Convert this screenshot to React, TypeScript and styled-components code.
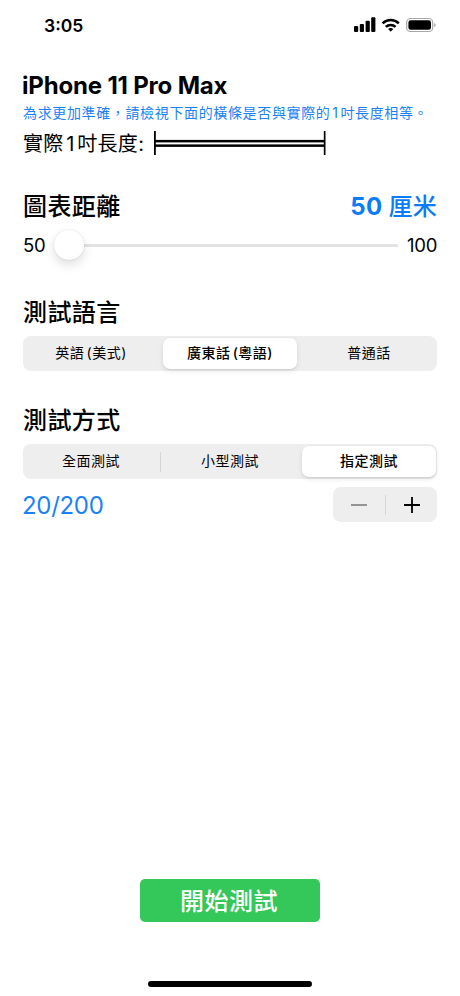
import React, { useState } from 'react';
import styled, { createGlobalStyle, css } from 'styled-components';

const GlobalStyle = createGlobalStyle`
  * { box-sizing: border-box; }
  body {
    margin: 0;
    background: #fff;
    color: #000;
    font-family: Inter, "Noto Sans CJK TC", sans-serif;
    -webkit-font-smoothing: antialiased;
  }
  button { font: inherit; color: inherit; border: 0; padding: 0; background: none; }
`;

const Screen = styled.div`
  width: 460px;
  height: 996px;
  display: flex;
  flex-direction: column;
  background: #fff;
  overflow: hidden;
`;

const StatusBar = styled.header`
  height: 50px;
  padding: 0 24px 0 44px;
  display: flex;
  align-items: center;
  justify-content: space-between;
`;

const Clock = styled.time`
  font-size: 17.5px;
  font-weight: 600;
  letter-spacing: 0;
  line-height: 20px;
  padding-top: 1px;
`;

const Content = styled.main`
  flex: 1;
  display: flex;
  flex-direction: column;
  padding: 21px 23px 0;
`;

const Device = styled.h1`
  margin: 0 0 0 -1px;
  font-size: 24px;
  line-height: 30px;
  font-weight: 650;
  letter-spacing: -0.18px;
`;

const Hint = styled.p`
  margin: 2px 0 0;
  color: #1a82f7;
  font-size: 14px;
  line-height: 20px;
  letter-spacing: 0.64px;
  white-space: nowrap;
`;

const Numeral = styled.span`
  margin: 0 0.13em;
`;

const MeasureRow = styled.div`
  margin-top: 6px;
  height: 28px;
  display: flex;
  align-items: center;
  justify-content: space-between;
  width: 303px;
`;

const MeasureLabel = styled.span`
  font-size: 20px;
  letter-spacing: 0.3px;
  line-height: 28px;
  padding-top: 1px;
  white-space: nowrap;
`;

const SectionHead = styled.div<{ $top: number }>`
  margin-top: ${(p) => p.$top}px;
  height: 32px;
  display: flex;
  align-items: center;
  justify-content: space-between;
`;

const Heading = styled.h2`
  margin: 0;
  padding-top: 1px;
  font-size: 24px;
  line-height: 32px;
  font-weight: 500;
  letter-spacing: 0.4px;
`;

const Distance = styled.span`
  color: #0a7cf8;
  padding-top: 1px;
  font-size: 24px;
  line-height: 32px;
  font-weight: 650;
  letter-spacing: 0.3px;
`;

const Unit = styled.span`
  font-weight: 500;
`;

const SliderRow = styled.div`
  margin-top: 7px;
  height: 32px;
  display: flex;
  align-items: center;
`;

const Bound = styled.span`
  font-size: 18.5px;
  letter-spacing: -0.3px;
  line-height: 32px;
`;

const Track = styled.div`
  flex: 1;
  height: 3px;
  margin: 1px 9px 0;
  border-radius: 2px;
  background: #e3e3e4;
  display: flex;
  align-items: center;
`;

const Knob = styled.div`
  width: 30px;
  height: 30px;
  flex: none;
  margin-top: -1px;
  border-radius: 50%;
  background: #fff;
  box-shadow: 0 0 2px rgba(0, 0, 0, 0.12), 0 5px 11px rgba(0, 0, 0, 0.13);
`;

const Segments = styled.div`
  margin-top: 8px;
  height: 35px;
  padding: 0 1px;
  display: flex;
  align-items: center;
  border-radius: 8px;
  background: #eeeeef;
`;

const Segment = styled.button<{ $active: boolean }>`
  flex: 1;
  height: 31px;
  padding-bottom: 1px;
  border-radius: 7px;
  font-size: 14px;
  letter-spacing: 0.5px;
  word-spacing: -2px;
  line-height: 30px;
  white-space: nowrap;
  ${(p) =>
    p.$active &&
    css`
      background: #fff;
      font-weight: 500;
      box-shadow: 0 2px 5px rgba(0, 0, 0, 0.1), 0 1px 1px rgba(0, 0, 0, 0.06);
    `}
`;

const Divider = styled.i<{ $visible?: boolean }>`
  flex: none;
  width: 1px;
  margin: 0 2px;
  height: 20px;
  background: ${(p) => (p.$visible ? '#d5d5d7' : 'transparent')};
`;

const AcuityRow = styled.div`
  margin-top: 8px;
  height: 35px;
  display: flex;
  align-items: center;
  justify-content: space-between;
`;

const Acuity = styled.span`
  color: #1a82f7;
  font-size: 24px;
  letter-spacing: -0.3px;
  margin-left: -1px;
  padding-top: 1px;
`;

const Stepper = styled.div`
  width: 104px;
  height: 35px;
  display: flex;
  align-items: center;
  border-radius: 8px;
  background: #eeeeef;
`;

const StepButton = styled.button`
  width: 48px;
  flex: none;
  height: 35px;
  display: flex;
  align-items: center;
  justify-content: center;
  &:disabled {
    color: #8a8a8b;
    width: 50px;
    padding-left: 2px;
  }
`;

const Footer = styled.footer`
  height: 117px;
  display: flex;
  flex-direction: column;
  align-items: center;
  justify-content: space-between;
  padding-bottom: 9px;
`;

const StartButton = styled.button`
  width: 180px;
  height: 43px;
  padding: 2px 2px 0 0;
  border-radius: 5px;
  background: #34c759;
  color: #fff;
  font-size: 24px;
  font-weight: 500;
  letter-spacing: 0.5px;
  line-height: 41px;
`;

const HomeIndicator = styled.div`
  width: 164px;
  height: 6px;
  border-radius: 3px;
  background: #000;
`;

function StatusIcons() {
  return (
    <svg width="82" height="18" viewBox="0 0 82 18" aria-hidden="true">
      <rect x="0" y="10" width="4.2" height="6" rx="1" />
      <rect x="5.8" y="8" width="4.2" height="8" rx="1" />
      <rect x="11.6" y="4.8" width="4.2" height="11.2" rx="1" />
      <rect x="17.2" y="1.3" width="4.2" height="14.7" rx="1" />
      <g fill="none" stroke="#000" strokeWidth="2.5">
        <path d="M28.6 7.3a11.8 11.8 0 0 1 16.2 0" />
        <path d="M31.8 10.8a7.2 7.2 0 0 1 9.8 0" />
      </g>
      <path d="M36.7 15.8l-2.6-2.7a3.8 3.8 0 0 1 5.2 0z" />
      <rect x="52.7" y="2.5" width="26" height="13" rx="3.8" fill="none" stroke="#a6a6a6" strokeWidth="1.2" />
      <rect x="54.4" y="4.2" width="22.6" height="9.6" rx="2.3" />
      <path d="M80.2 6.9c2 .8 2 3.4 0 4.2z" fill="#a6a6a6" />
    </svg>
  );
}

function InchBar() {
  return (
    <svg width="172" height="24" viewBox="0 0 172 24" aria-hidden="true">
      <rect x="0" y="0" width="1.8" height="24" />
      <rect x="169.8" y="0" width="1.7" height="24" />
      <rect x="0" y="8.9" width="171" height="2.5" />
      <rect x="0" y="13.4" width="171" height="2.5" />
    </svg>
  );
}

interface SegmentedProps {
  items: string[];
  value: number;
  onChange: (index: number) => void;
}

function Segmented({ items, value, onChange }: SegmentedProps) {
  return (
    <Segments>
      {items.map((item, i) => (
        <React.Fragment key={item}>
          {i > 0 && <Divider $visible={value !== i && value !== i - 1} />}
          <Segment $active={value === i} onClick={() => onChange(i)}>
            {item}
          </Segment>
        </React.Fragment>
      ))}
    </Segments>
  );
}

export default function App() {
  const [language, setLanguage] = useState(1);
  const [mode, setMode] = useState(2);

  return (
    <Screen lang="zh-HK">
      <GlobalStyle />
      <StatusBar>
        <Clock>3:05</Clock>
        <StatusIcons />
      </StatusBar>
      <Content>
        <Device>iPhone 11 Pro Max</Device>
        <Hint>
          為求更加準確，請檢視下面的橫條是否與實際的<Numeral>1</Numeral>吋長度相等。
        </Hint>
        <MeasureRow>
          <MeasureLabel>
            實際<Numeral>1</Numeral>吋長度:
          </MeasureLabel>
          <InchBar />
        </MeasureRow>

        <SectionHead $top={33}>
          <Heading>圖表距離</Heading>
          <Distance>
            50 <Unit>厘米</Unit>
          </Distance>
        </SectionHead>
        <SliderRow>
          <Bound>50</Bound>
          <Track>
            <Knob />
          </Track>
          <Bound>100</Bound>
        </SliderRow>

        <SectionHead $top={35}>
          <Heading>測試語言</Heading>
        </SectionHead>
        <Segmented items={['英語 (美式)', '廣東話 (粵語)', '普通話']} value={language} onChange={setLanguage} />

        <SectionHead $top={33}>
          <Heading>測試方式</Heading>
        </SectionHead>
        <Segmented items={['全面測試', '小型測試', '指定測試']} value={mode} onChange={setMode} />
        <AcuityRow>
          <Acuity>20/200</Acuity>
          <Stepper>
            <StepButton disabled aria-label="減少">
              <svg width="16" height="16" viewBox="0 0 16 16" stroke="currentColor" strokeWidth="1.8">
                <path d="M0 8h16" />
              </svg>
            </StepButton>
            <Divider $visible />
            <StepButton aria-label="增加">
              <svg width="16" height="16" viewBox="0 0 16 16" stroke="currentColor" strokeWidth="1.8">
                <path d="M0 8h16M8 0v16" />
              </svg>
            </StepButton>
          </Stepper>
        </AcuityRow>
      </Content>
      <Footer>
        <StartButton>開始測試</StartButton>
        <HomeIndicator />
      </Footer>
    </Screen>
  );
}
